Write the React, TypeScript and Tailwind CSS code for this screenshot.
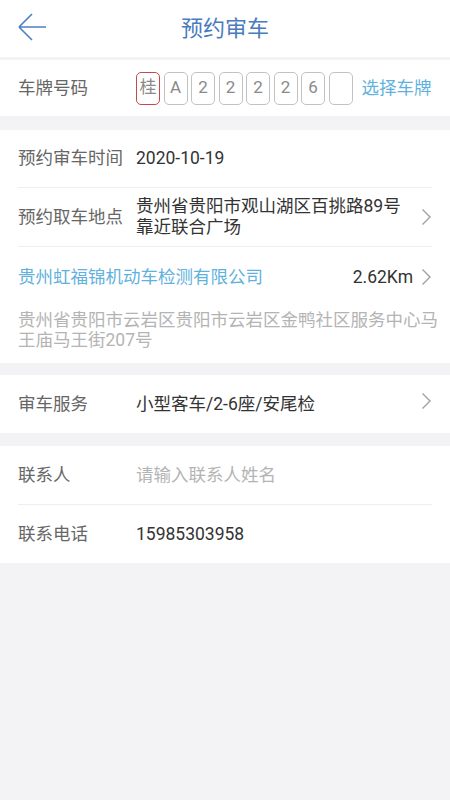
import React from "react";

const FONT = '"Roboto", "Noto Sans CJK SC", "Noto Sans", sans-serif';

function Chevron() {
  return (
    <svg width="11" height="18" viewBox="0 0 11 18" className="shrink-0">
      <path d="M1.5 1.5 L9 9 L1.5 16.5" fill="none" stroke="#a0a0a0" strokeWidth="1.4" />
    </svg>
  );
}

function Divider() {
  return <div className="mx-[18px] h-px bg-[#eeeeee]" />;
}

export default function App() {
  const plate = ["桂", "A", "2", "2", "2", "2", "6", ""];
  return (
    <div className="min-h-[800px] w-[450px] bg-[#f3f3f5]" style={{ fontFamily: FONT }}>
      {/* Header */}
      <div className="relative flex h-[57px] items-center justify-center bg-white">
        <svg width="30" height="30" viewBox="0 0 30 30" className="absolute left-[17px] top-[12px]">
          <path d="M2 15 H29 M2 15 L15 2 M2 15 L15 28" fill="none" stroke="#4d7fc3" strokeWidth="1.6" />
        </svg>
        <span className="text-[22px] text-[#4a7bbd]">预约审车</span>
      </div>

      {/* Plate row */}
      <div className="mt-[3px] flex h-[56px] items-center bg-white pl-[18px]">
        <span className="w-[118px] text-[17.5px] text-[#666666]">车牌号码</span>
        <div className="flex gap-[3.5px]">
          {plate.map((c, i) => (
            <div
              key={i}
              className={
                i === 0
                  ? "flex h-[33px] w-[24px] items-center justify-center rounded-[5px] border border-[#c64a4a] text-[17px] text-[#8a8a8a]"
                  : "flex h-[33px] w-[24px] items-center justify-center rounded-[5px] border border-[#c2c2c2] text-[17px] text-[#8a8a8a]"
              }
            >
              {c}
            </div>
          ))}
        </div>
        <span className="ml-[9px] text-[17.5px] text-[#5fb2dd]">选择车牌</span>
      </div>

      {/* Section 2 */}
      <div className="mt-[14px] bg-white">
        <div className="flex h-[57px] items-center pl-[18px]">
          <span className="w-[118px] text-[17.5px] text-[#666666]">预约审车时间</span>
          <span className="text-[17.5px] text-[#333333]">2020-10-19</span>
        </div>
        <Divider />
        <div className="flex h-[58px] items-center pl-[18px] pr-[18px]">
          <span className="w-[118px] shrink-0 text-[17.5px] text-[#666666]">预约取车地点</span>
          <span className="flex-1 text-[17.5px] leading-[21px] text-[#333333]">
            贵州省贵阳市观山湖区百挑路89号
            <br />
            靠近联合广场
          </span>
          <Chevron />
        </div>
        <Divider />
        <div className="flex h-[60px] items-center pl-[18px] pr-[18px]">
          <span className="flex-1 text-[17.5px] text-[#5fb2dd]">贵州虹福锦机动车检测有限公司</span>
          <span className="mr-[8px] text-[17.5px] text-[#333333]">2.62Km</span>
          <Chevron />
        </div>
        <p className="mt-[3px] pb-[13px] pl-[18px] pr-[10px] text-[17.5px] leading-[20px] text-[#b4b4b4]">
          贵州省贵阳市云岩区贵阳市云岩区金鸭社区服务中心马王庙马王街207号
        </p>
      </div>

      {/* Service */}
      <div className="mt-[12px] flex h-[58px] items-center bg-white pl-[18px] pr-[18px]">
        <span className="w-[118px] text-[17.5px] text-[#666666]">审车服务</span>
        <span className="flex-1 text-[17.5px] text-[#333333]">小型客车/2-6座/安尾检</span>
        <div className="-mt-[6px]">
          <Chevron />
        </div>
      </div>

      {/* Contact */}
      <div className="mt-[13px] bg-white">
        <div className="flex h-[58px] items-center pl-[18px]">
          <span className="w-[118px] text-[17.5px] text-[#666666]">联系人</span>
          <span className="text-[17.5px] text-[#b4b4b4]">请输入联系人姓名</span>
        </div>
        <Divider />
        <div className="flex h-[58px] items-center pl-[18px]">
          <span className="w-[118px] text-[17.5px] text-[#666666]">联系电话</span>
          <span className="text-[17.5px] text-[#333333]">15985303958</span>
        </div>
      </div>
    </div>
  );
}
